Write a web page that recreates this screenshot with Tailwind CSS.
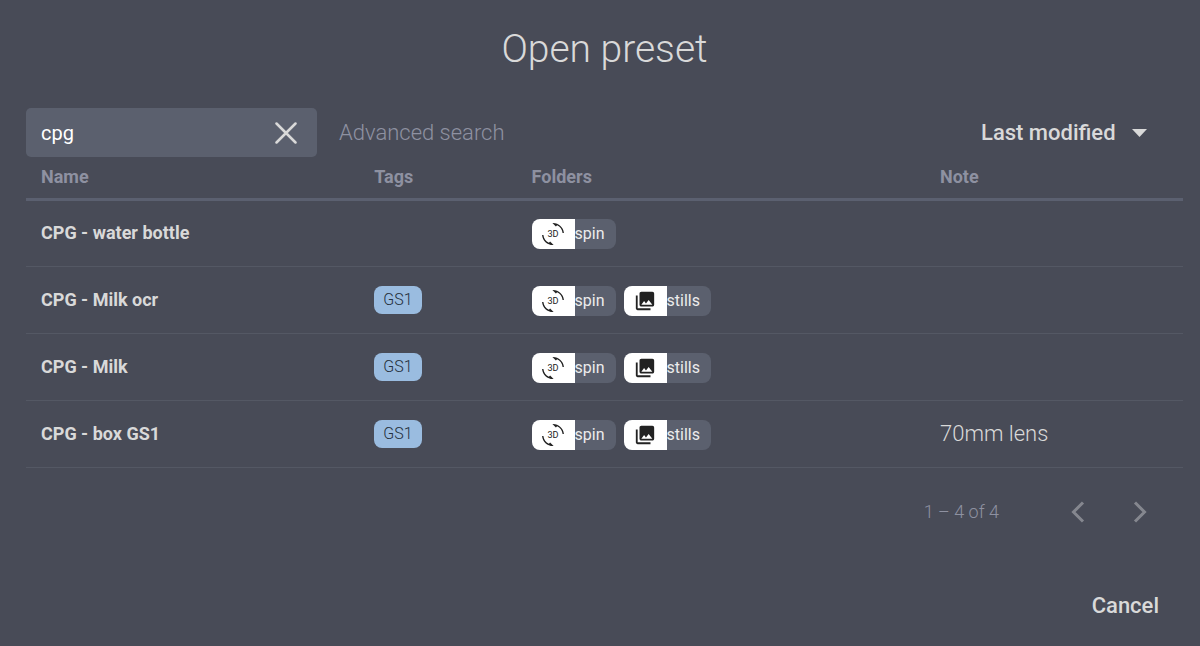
<!DOCTYPE html>
<html lang="en">
<head>
    <meta charset="UTF-8">
    <meta name="viewport" content="width=device-width, initial-scale=1.0">
    <title>Open preset</title>
    <script src="https://cdn.jsdelivr.net/npm/@tailwindcss/browser@4"></script>
</head>
<body class="bg-[#484b57] text-[#d9d9d9] font-['Roboto',sans-serif] min-h-screen">
    <!-- Icons shared by the folder chips -->
    <svg class="hidden">
        <symbol id="icon-spin" viewBox="0 0 24 24">
            <path fill="#222" d="M7.52 21.48C4.25 19.94 1.91 16.76 1.55 13H.05C.56 19.16 5.71 24 12 24l.66-.03-3.81-3.81-1.33 1.32zM12 0l-.66.03 3.81 3.81 1.33-1.33c3.27 1.55 5.61 4.72 5.96 8.48h1.500C23.44 4.840 18.290 0 12 0z"/>
            <text x="12" y="15.5" text-anchor="middle" font-size="10" fill="#222">3D</text>
        </symbol>
        <symbol id="icon-stills" viewBox="0 0 24 24">
            <path fill="#222" d="M22 16V4c0-1.100-.9-2-2-2H8c-1.100 0-2 .9-2 2v12c0 1.100.9 2 2 2h12c1.100 0 2-.9 2-2zm-11-4l2.030 2.710L16 11l4 5H8l3-4zM2 6v14c0 1.100.9 2 2 2h14v-2H4V6H2z"/>
        </symbol>
    </svg>

    <main class="pl-[26px] pr-[17px] pt-[25px] pb-5">
        <h1 class="text-[39px] leading-[48px] font-light text-center mb-[35px]">Open preset</h1>

        <div class="flex items-center">
            <div class="flex items-center w-[291px] h-[49px] bg-[#5b606e] rounded-[5px] pl-[15px] pr-5">
                <input type="text" aria-label="Search presets" value="cpg" class="flex-1 min-w-0 text-xl text-white outline-none">
                <button aria-label="Clear search">
                    <svg class="size-[22px]" viewBox="0 0 22 22" fill="none" stroke="#d9d9d9" stroke-width="2.500" stroke-linecap="round"><path d="M1.500 1.500L20.500 20.500M20.500 1.500L1.500 20.500"/></svg>
                </button>
            </div>
            <a href="#" class="ml-[22px] text-[22px] font-light text-[#8e91a1]">Advanced search</a>
            <div class="relative ml-auto mr-9">
                <select aria-label="Sort by" class="appearance-none text-[22px] font-medium pr-[31px] outline-none">
                    <option>Last modified</option>
                </select>
                <svg class="absolute right-0 top-1/2 -translate-y-1/2 w-[15px] h-2 pointer-events-none" viewBox="0 0 15 8" fill="#d9d9d9"><path d="M0 0H15L7.500 8Z"/></svg>
            </div>
        </div>

        <table class="w-full table-fixed text-left">
            <thead class="text-lg leading-6 text-[#8e91a1]">
                <tr class="h-[42px] border-b-3 border-[#5b6070]">
                    <th class="w-[30.1%] pl-[15px] font-bold">Name</th>
                    <th class="w-[13.6%] font-bold">Tags</th>
                    <th class="w-[35.3%] font-bold">Folders</th>
                    <th class="font-bold">Note</th>
                </tr>
            </thead>
            <tbody id="presets"></tbody>
        </table>

        <div class="flex items-center justify-end h-[88px] text-[#8e91a1]">
            <span class="text-lg font-light mr-[72px]">1 – 4 of 4</span>
            <button aria-label="Previous page" class="mr-12">
                <svg class="w-[14px] h-[22px]" viewBox="0 0 14 22" fill="none" stroke="#85878f" stroke-width="3"><path d="M12 1.500L2.500 11L12 20.500"/></svg>
            </button>
            <button aria-label="Next page" class="mr-9">
                <svg class="w-[14px] h-[22px]" viewBox="0 0 14 22" fill="none" stroke="#85878f" stroke-width="3"><path d="M2 1.500L11.500 11L2 20.500"/></svg>
            </button>
        </div>

        <div class="flex justify-end mt-[34px] pr-6">
            <button class="text-[22px] leading-8 font-medium">Cancel</button>
        </div>
    </main>

    <script>
        const presets = [
            { name: 'CPG - water bottle', tags: [], folders: ['spin'], note: '' },
            { name: 'CPG - Milk ocr', tags: ['GS1'], folders: ['spin', 'stills'], note: '' },
            { name: 'CPG - Milk', tags: ['GS1'], folders: ['spin', 'stills'], note: '' },
            { name: 'CPG - box GS1', tags: ['GS1'], folders: ['spin', 'stills'], note: '70mm lens' }
        ];

        function tagChip(tag) {
            return `<span class="inline-flex items-center h-7 px-[9px] rounded-lg bg-[#9abce0] text-[#25303c] text-base font-light">${tag}</span>`;
        }

        function folderChip(folder) {
            return `
                <span class="flex items-center h-[30px] pr-[11px] rounded-lg bg-[#5b606e] overflow-hidden text-base text-[#ececec]">
                    <span class="flex items-center justify-center w-[43px] h-full bg-white">
                        <svg class="size-[22px]"><use href="#icon-${folder}"/></svg>
                    </span>
                    ${folder}
                </span>`;
        }

        document.getElementById('presets').innerHTML = presets.map(preset => `
            <tr class="h-[67px] border-b border-[#545864]">
                <td class="pl-[15px] text-lg font-bold">${preset.name}</td>
                <td>${preset.tags.map(tagChip).join('')}</td>
                <td><div class="flex gap-2 pt-[2px]">${preset.folders.map(folderChip).join('')}</div></td>
                <td class="text-[22px] font-light">${preset.note}</td>
            </tr>
        `).join('');
    </script>
</body>
</html>
